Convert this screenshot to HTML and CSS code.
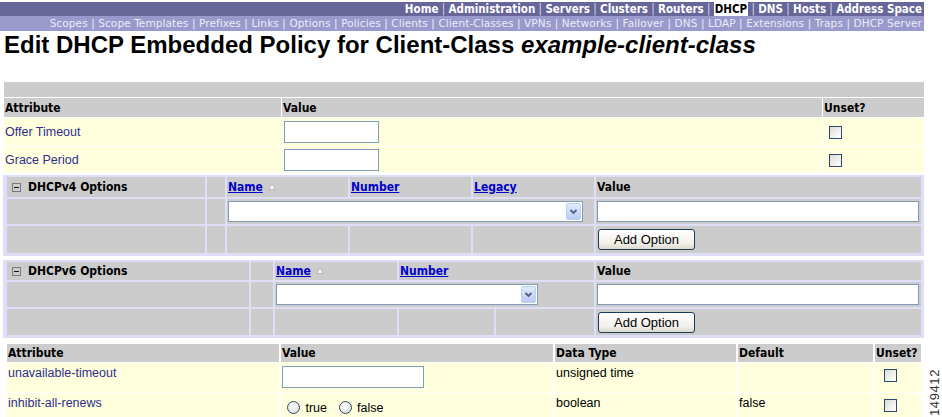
FILE: index.html
```html
<!DOCTYPE html>
<html lang="en">
<head>
    <meta charset="UTF-8">
    <title>Edit DHCP Embedded Policy for Client-Class</title>
    <link rel="stylesheet" href="styles.css">
</head>
<body>
<div class="page">
    <div class="nav-main">
        <a href="#">Home</a><span class="sep"> | </span><a href="#">Administration</a><span class="sep"> | </span><a href="#">Servers</a><span class="sep"> | </span><a href="#">Clusters</a><span class="sep"> | </span><a href="#">Routers</a><span class="sep"> | </span><span class="active">DHCP</span><span class="sep"> | </span><a href="#">DNS</a><span class="sep"> | </span><a href="#">Hosts</a><span class="sep"> | </span><a href="#">Address Space</a>
    </div>
    <div class="nav-sub">
        <a href="#">Scopes</a> | <a href="#">Scope Templates</a> | <a href="#">Prefixes</a> | <a href="#">Links</a> | <a href="#">Options</a> | <a href="#">Policies</a> | <a href="#">Clients</a> | <a href="#">Client-Classes</a> | <a href="#">VPNs</a> | <a href="#">Networks</a> | <a href="#">Failover</a> | <a href="#">DNS</a> | <a href="#">LDAP</a> | <a href="#">Extensions</a> | <a href="#">Traps</a> | <a href="#">DHCP Server</a>
    </div>

    <h1>Edit DHCP Embedded Policy for Client-Class <em>example-client-class</em></h1>

    <!-- basic policy attributes -->
    <table class="attrs">
        <colgroup>
            <col class="w277"><col class="w540"><col class="w101">
        </colgroup>
        <tr class="bar"><td colspan="3"></td></tr>
        <tr class="head"><th>Attribute</th><th>Value</th><th>Unset?</th></tr>
        <tr class="tall">
            <td><a class="attr" href="#">Offer Timeout</a></td>
            <td><input type="text" class="txt txt-short"></td>
            <td><input type="checkbox" class="chk"></td>
        </tr>
        <tr>
            <td><a class="attr" href="#">Grace Period</a></td>
            <td><input type="text" class="txt txt-short"></td>
            <td><input type="checkbox" class="chk"></td>
        </tr>
    </table>

    <!-- DHCPv4 options -->
    <table class="opts">
        <colgroup>
            <col class="w198"><col class="w18"><col class="w121"><col class="w121"><col class="w121"><col class="w325">
        </colgroup>
        <tr class="head">
            <th><svg class="toggle" width="9" height="9" viewBox="0 0 9 9"><rect x="0.5" y="0.5" width="8" height="8" fill="none" stroke="#7a7a7a"/><path d="M2 4.5h5" stroke="#111"/></svg>DHCPv4 Options</th>
            <th></th>
            <th><a class="sort-link" href="#">Name</a><svg class="sort" width="8" height="7" viewBox="0 0 8 7"><path d="M4 0.6L7.4 6.4H0.6Z" fill="#f6f6f6" stroke="#a8a8a8" stroke-width="0.7"/></svg></th>
            <th><a class="sort-link" href="#">Number</a></th>
            <th><a class="sort-link" href="#">Legacy</a></th>
            <th>Value</th>
        </tr>
        <tr class="entry">
            <td></td>
            <td></td>
            <td colspan="3">
                <span class="combo">
                    <select class="sel sel-v4"><option></option></select>
                    <span class="combo-arrow"><svg width="13" height="15" viewBox="0 0 13 15"><path d="M3.5 6l3 3 3-3" fill="none" stroke="#4d6185" stroke-width="1.8"/></svg></span>
                </span>
            </td>
            <td><input type="text" class="txt txt-wide"></td>
        </tr>
        <tr class="actions">
            <td></td><td></td><td></td><td></td><td></td>
            <td><button class="btn">Add Option</button></td>
        </tr>
    </table>

    <!-- DHCPv6 options -->
    <table class="opts opts-v6">
        <colgroup>
            <col class="w242"><col class="w22"><col class="w122"><col class="w95"><col class="w98"><col class="w325">
        </colgroup>
        <tr class="head">
            <th><svg class="toggle" width="9" height="9" viewBox="0 0 9 9"><rect x="0.5" y="0.5" width="8" height="8" fill="none" stroke="#7a7a7a"/><path d="M2 4.5h5" stroke="#111"/></svg>DHCPv6 Options</th>
            <th></th>
            <th><a class="sort-link" href="#">Name</a><svg class="sort" width="8" height="7" viewBox="0 0 8 7"><path d="M4 0.6L7.4 6.4H0.6Z" fill="#f6f6f6" stroke="#a8a8a8" stroke-width="0.7"/></svg></th>
            <th colspan="2"><a class="sort-link" href="#">Number</a></th>
            <th>Value</th>
        </tr>
        <tr class="entry">
            <td></td>
            <td></td>
            <td colspan="3">
                <span class="combo">
                    <select class="sel sel-v6"><option></option></select>
                    <span class="combo-arrow"><svg width="13" height="15" viewBox="0 0 13 15"><path d="M3.5 6l3 3 3-3" fill="none" stroke="#4d6185" stroke-width="1.8"/></svg></span>
                </span>
            </td>
            <td><input type="text" class="txt txt-wide"></td>
        </tr>
        <tr class="actions">
            <td></td><td></td><td></td><td></td><td></td>
            <td><button class="btn">Add Option</button></td>
        </tr>
    </table>

    <!-- remaining policy attributes -->
    <table class="details">
        <colgroup>
            <col class="w272"><col class="w272"><col class="w181"><col class="w135"><col class="w46">
        </colgroup>
        <tr class="head">
            <th>Attribute</th><th>Value</th><th>Data Type</th><th>Default</th><th>Unset?</th>
        </tr>
        <tr>
            <td><a class="attr" href="#">unavailable-timeout</a></td>
            <td><input type="text" class="txt txt-mid"></td>
            <td>unsigned time</td>
            <td></td>
            <td><input type="checkbox" class="chk"></td>
        </tr>
        <tr>
            <td><a class="attr" href="#">inhibit-all-renews</a></td>
            <td class="radios">
                <label><input type="radio" name="inhibit" class="rad"> true</label>
                <label><input type="radio" name="inhibit" class="rad"> false</label>
            </td>
            <td>boolean</td>
            <td>false</td>
            <td><input type="checkbox" class="chk"></td>
        </tr>
    </table>

    <div class="fig-id">149412</div>
</div>
</body>
</html>
```

FILE: styles.css
```css
body {
    margin: 0;
    font-family: "Liberation Sans", Arial, sans-serif;
    background: #fff;
    color: #000;
}
.page {
    position: relative;
    width: 924px;
    padding-top: 2px;
}

/* navigation bars */
.nav-main {
    background: #666699;
    height: 14px;
    line-height: 14px;
    padding-right: 2px;
    text-align: right;
    white-space: nowrap;
    color: #fff;
    font-family: "DejaVu Sans Condensed", "DejaVu Sans", sans-serif;
    font-stretch: condensed;
    font-weight: bold;
    font-size: 11.5px;
}
.nav-main a {
    color: #fff;
    text-decoration: none;
}
.nav-main .sep {
    color: #d8d8ee;
    font-weight: normal;
}
.nav-main .active {
    background: #fff;
    color: #000;
    padding: 0 1px;
}
.nav-sub {
    background: #9999cc;
    height: 15px;
    line-height: 15px;
    padding-right: 2px;
    text-align: right;
    white-space: nowrap;
    color: #ececf8;
    font-family: "DejaVu Sans", sans-serif;
    font-size: 10.5px;
    letter-spacing: 0.1px;
}
.nav-sub a {
    color: #ececf8;
    text-decoration: none;
}

h1 {
    margin: 0 0 22px 4px;
    font-size: 24px;
    line-height: 28px;
    font-weight: bold;
}
h1 em {
    font-style: italic;
}

/* tables */
table {
    border-collapse: separate;
    table-layout: fixed;
}
th {
    background: #cccccc;
    text-align: left;
    padding: 0 1px;
    font-family: "DejaVu Sans Condensed", "DejaVu Sans", sans-serif;
    font-stretch: condensed;
    font-size: 12px;
    font-weight: bold;
    white-space: nowrap;
}
td {
    padding: 0 1px;
}
a.attr {
    color: #2e2e8f;
    text-decoration: none;
}

.w18 { width: 18px; }
.w22 { width: 22px; }
.w46 { width: 46px; }
.w95 { width: 95px; }
.w98 { width: 98px; }
.w101 { width: 101px; }
.w121 { width: 121px; }
.w122 { width: 122px; }
.w135 { width: 135px; }
.w181 { width: 181px; }
.w198 { width: 198px; }
.w242 { width: 242px; }
.w272 { width: 272px; }
.w277 { width: 277px; }
.w325 { width: 325px; }
.w540 { width: 540px; }

.attrs {
    width: 922px;
    margin-left: 3px;
    border-spacing: 1px;
}
.attrs .bar td {
    background: #cccccc;
    height: 15px;
    padding: 0;
}
.attrs .head th {
    height: 19px;
}
.attrs td {
    background: #ffffdd;
    height: 25px;
    font-size: 12.5px;
    vertical-align: middle;
}
.attrs .tall td {
    height: 28px;
}

.opts {
    width: 921px;
    margin: 2px 0 0 3px;
    padding: 0 1px 1px 2px;
    border-spacing: 2px;
    background: #dedef6;
}
.opts td {
    background: #cccccc;
}
.opts .head th {
    height: 20px;
}
.opts-v6 {
    margin-top: 4px;
}
.opts-v6 .head th {
    height: 18px;
}
.opts .entry td {
    height: 25px;
}
.opts .actions td {
    height: 27px;
}
.opts-v6 .actions td {
    height: 26px;
}
.toggle {
    margin: 0 7px 0 4px;
    vertical-align: -1px;
}
.sort-link {
    color: #0000cc;
    text-decoration: underline;
}
.sort {
    margin-left: 5px;
    vertical-align: 1px;
}

.details {
    width: 918px;
    margin: 5px 0 0 5px;
    border-spacing: 2px 1px;
}
.details .head th {
    height: 18px;
}
.details td {
    background: #ffffdd;
    height: 27px;
    padding: 2px 1px 0;
    vertical-align: top;
    font-size: 12.5px;
    line-height: 16px;
}

/* form controls */
.txt {
    box-sizing: border-box;
    border: 1px solid #7f9db9;
    background: #fff;
    padding: 0 2px;
    margin: 0;
    vertical-align: middle;
}
.txt-short {
    width: 95px;
    height: 22px;
    margin-left: 1px;
}
.txt-mid {
    width: 142px;
    height: 22px;
    margin-top: 1px;
}
.txt-wide {
    width: 322px;
    height: 21px;
}
.chk {
    appearance: none;
    box-sizing: border-box;
    width: 13px;
    height: 13px;
    margin: 0 0 0 5px;
    border: 1px solid #2b4a66;
    background: linear-gradient(135deg, #dcdcd6, #ffffff);
    vertical-align: middle;
}
.details .chk {
    margin: 4px 0 0 8px;
    vertical-align: top;
}
.radios {
    font-size: 13px;
}
.radios label {
    margin-right: 3px;
}
.rad {
    appearance: none;
    box-sizing: border-box;
    width: 13px;
    height: 13px;
    margin: 6px 2px 0 5px;
    border: 1px solid #2b4a66;
    border-radius: 50%;
    background: radial-gradient(circle at 40% 35%, #ffffff, #d6d6d0);
    vertical-align: -2px;
}

.combo {
    position: relative;
    display: inline-block;
    vertical-align: middle;
}
.sel {
    appearance: none;
    box-sizing: border-box;
    height: 21px;
    margin: 0;
    border: 1px solid #7f9db9;
    background: #fff;
    display: block;
}
.sel-v4 {
    width: 355px;
}
.sel-v6 {
    width: 262px;
}
.combo-arrow {
    position: absolute;
    right: 2px;
    top: 2px;
    width: 15px;
    height: 17px;
    box-sizing: border-box;
    border: 1px solid #bcd0f2;
    border-radius: 2px;
    background: linear-gradient(#e2ebfd, #b7cbf3);
    display: flex;
    align-items: center;
    justify-content: center;
}

.btn {
    width: 97px;
    height: 21px;
    margin-left: 1px;
    padding: 0;
    border: 1px solid #1c3a5a;
    border-radius: 3px;
    background: linear-gradient(#ffffff, #f1f0ea 70%, #dcd9cc);
    font-family: "Liberation Sans", Arial, sans-serif;
    font-size: 13px;
    color: #000;
    vertical-align: middle;
}

/* figure number printed at the edge */
.fig-id {
    position: absolute;
    left: 927px;
    top: 369px;
    writing-mode: vertical-rl;
    transform: rotate(180deg);
    font-size: 13px;
    letter-spacing: 0.6px;
    color: #333;
}
```
